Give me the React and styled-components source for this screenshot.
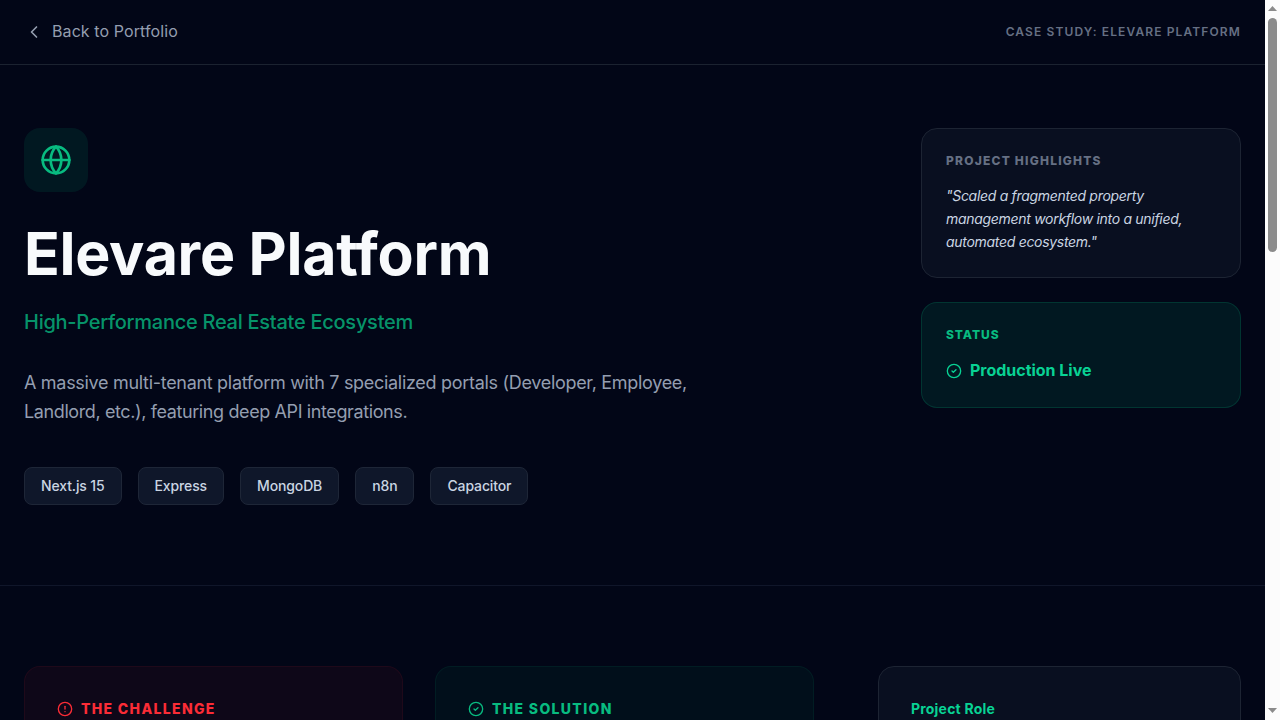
import React from 'react';
import styled, { createGlobalStyle } from 'styled-components';
import { ChevronLeft, Globe, CircleCheck, CircleAlert } from 'lucide-react';

const GlobalStyle = createGlobalStyle`
	* {
		box-sizing: border-box;
		margin: 0;
		padding: 0;
	}
	body {
		background: #020617;
		font-family: Inter, 'Liberation Sans', sans-serif;
		overflow: hidden;
	}
`;

const Window = styled.div`
	display: flex;
	height: 100vh;
	overflow: hidden;
`;

const Page = styled.div`
	flex: 1;
	min-width: 0;
	overflow: hidden;
	background: #020617;
`;

const Header = styled.header`
	display: flex;
	align-items: center;
	justify-content: space-between;
	height: 65px;
	padding: 0 24px;
	border-bottom: 1px solid #1b2230;
`;

const BackLink = styled.a`
	display: flex;
	align-items: center;
	gap: 8px;
	color: #949eb0;
	font-size: 16px;
	line-height: 24px;
	letter-spacing: 0.09px;
`;

const BackText = styled.span`
	padding-bottom: 2px;
	line-height: 22px;
`;

const CaseLabel = styled.span`
	color: #667084;
	font-size: 12px;
	font-weight: 600;
	line-height: 16px;
	letter-spacing: 1.12px;
`;

const Hero = styled.section`
	display: flex;
	justify-content: space-between;
	padding: 63px 24px 80px;
	border-bottom: 1px solid #10162a;
`;

const Intro = styled.div`
	width: 768px;
`;

const IconTile = styled.div`
	display: flex;
	align-items: center;
	justify-content: center;
	width: 64px;
	height: 64px;
	margin-bottom: 32px;
	border-radius: 16px;
	background: rgba(0, 188, 125, 0.1);
	color: #08bb80;
`;

const Title = styled.h1`
	margin-bottom: 24px;
	color: #f8fafc;
	font-size: 59px;
	font-weight: 700;
	line-height: 60px;
	letter-spacing: -0.27px;
`;

const Subtitle = styled.p`
	margin-bottom: 32px;
	color: rgba(8, 187, 128, 0.8);
	font-size: 20px;
	font-weight: 500;
	line-height: 28px;
	letter-spacing: -0.265px;
`;

const Description = styled.p`
	margin-bottom: 40px;
	color: #949eb0;
	font-size: 18px;
	line-height: 29.25px;
`;

const Line = styled.span`
	display: block;
	letter-spacing: ${(p) => p.$tracking}px;
`;

const Tags = styled.div`
	display: flex;
	gap: 16px;
`;

const Tag = styled.span`
	padding: 8px 16px;
	border: 1px solid #1e2637;
	border-radius: 8px;
	background: #0f172a;
	color: #cad5e2;
	font-size: 14px;
	font-weight: 500;
	line-height: 20px;
	letter-spacing: -0.13px;
`;

const Sidebar = styled.aside`
	display: flex;
	flex-direction: column;
	gap: 24px;
	width: 320px;
`;

const InfoCard = styled.div`
	padding: 24px;
	border: 1px solid ${(p) => (p.$green ? 'rgba(0, 188, 125, 0.18)' : '#1d2433')};
	border-radius: 16px;
	background: ${(p) => (p.$green ? 'rgba(0, 188, 125, 0.1)' : 'rgba(15, 23, 42, 0.5)')};
`;

const CardLabel = styled.h3`
	margin-bottom: 16px;
	color: ${(p) => (p.$green ? '#08bb80' : '#667084')};
	font-size: 12px;
	font-weight: 800;
	line-height: 16px;
	letter-spacing: ${(p) => (p.$green ? 0.95 : 1.22)}px;
`;

const Quote = styled.p`
	color: #cad5e2;
	font-size: 14px;
	font-style: italic;
	line-height: 22.75px;
	letter-spacing: -0.3px;
`;

const StatusLine = styled.div`
	display: flex;
	align-items: center;
	gap: 8px;
	color: #08d294;
	font-size: 16px;
	font-weight: 700;
	line-height: 24px;
	letter-spacing: -0.02px;
`;

const StatusText = styled.span`
	padding-bottom: 2px;
	line-height: 22px;
`;

const Details = styled.section`
	display: grid;
	grid-template-columns: 790px 363px;
	gap: 64px;
	padding: 80px 24px;
`;

const Pair = styled.div`
	display: grid;
	grid-template-columns: 1fr 1fr;
	gap: 32px;
`;

const Panel = styled.div`
	height: 240px;
	padding: 32px;
	border: 1px solid ${(p) => p.$border};
	border-radius: 16px;
	background: ${(p) => p.$background};
`;

const PanelTitle = styled.h3`
	display: flex;
	align-items: center;
	gap: 8px;
	color: ${(p) => p.$color};
	font-size: 14px;
	font-weight: 800;
	line-height: 20px;
	letter-spacing: 1.33px;
`;

const RoleTitle = styled.h4`
	color: #08d294;
	font-size: 14px;
	font-weight: 700;
	line-height: 20px;
	letter-spacing: 0.2px;
`;

const Scrollbar = styled.div`
	display: flex;
	flex-direction: column;
	align-items: center;
	justify-content: space-between;
	width: 15px;
	background: #fcfcfc;
`;

const Thumb = styled.div`
	width: 9px;
	height: 234px;
	margin: 4px 0 auto;
	border-radius: 5px;
	background: #8b8b8b;
`;

const ScrollArrow = styled.svg`
	display: block;
	width: 15px;
	height: 14px;
	fill: #8b8b8b;
`;

const tags = ['Next.js 15', 'Express', 'MongoDB', 'n8n', 'Capacitor'];

export default function App() {
	return (
		<Window>
			<GlobalStyle />
			<Page>
				<Header>
					<BackLink>
						<ChevronLeft size={20} />
						<BackText>Back to Portfolio</BackText>
					</BackLink>
					<CaseLabel>CASE STUDY: ELEVARE PLATFORM</CaseLabel>
				</Header>
				<Hero>
					<Intro>
						<IconTile>
							<Globe size={32} />
						</IconTile>
						<Title>Elevare Platform</Title>
						<Subtitle>High-Performance Real Estate Ecosystem</Subtitle>
						<Description>
							<Line $tracking={-0.305}>
								A massive multi-tenant platform with 7 specialized portals (Developer, Employee,
							</Line>
							<Line $tracking={-0.39}>Landlord, etc.), featuring deep API integrations.</Line>
						</Description>
						<Tags>
							{tags.map((tag) => (
								<Tag key={tag}>{tag}</Tag>
							))}
						</Tags>
					</Intro>
					<Sidebar>
						<InfoCard>
							<CardLabel>PROJECT HIGHLIGHTS</CardLabel>
							<Quote>
								"Scaled a fragmented property
								<br />
								management workflow into a unified,
								<br />
								automated ecosystem."
							</Quote>
						</InfoCard>
						<InfoCard $green>
							<CardLabel $green>STATUS</CardLabel>
							<StatusLine>
								<CircleCheck size={16} />
								<StatusText>Production Live</StatusText>
							</StatusLine>
						</InfoCard>
					</Sidebar>
				</Hero>
				<Details>
					<Pair>
						<Panel $border="rgba(251, 44, 54, 0.07)" $background="rgba(251, 44, 54, 0.05)">
							<PanelTitle $color="#fb2c36">
								<CircleAlert size={16} />
								THE CHALLENGE
							</PanelTitle>
						</Panel>
						<Panel $border="rgba(0, 188, 125, 0.08)" $background="rgba(0, 188, 125, 0.05)">
							<PanelTitle $color="#08bb80">
								<CircleCheck size={16} />
								THE SOLUTION
							</PanelTitle>
						</Panel>
					</Pair>
					<Panel $border="#1d2433" $background="rgba(15, 23, 42, 0.5)">
						<RoleTitle>Project Role</RoleTitle>
					</Panel>
				</Details>
			</Page>
			<Scrollbar>
				<ScrollArrow viewBox="0 0 15 14">
					<path d="M3 11 L7.5 6 L12 11 Z" />
				</ScrollArrow>
				<Thumb />
				<ScrollArrow viewBox="0 0 15 14">
					<path d="M3 2 L7.5 7 L12 2 Z" />
				</ScrollArrow>
			</Scrollbar>
		</Window>
	);
}
